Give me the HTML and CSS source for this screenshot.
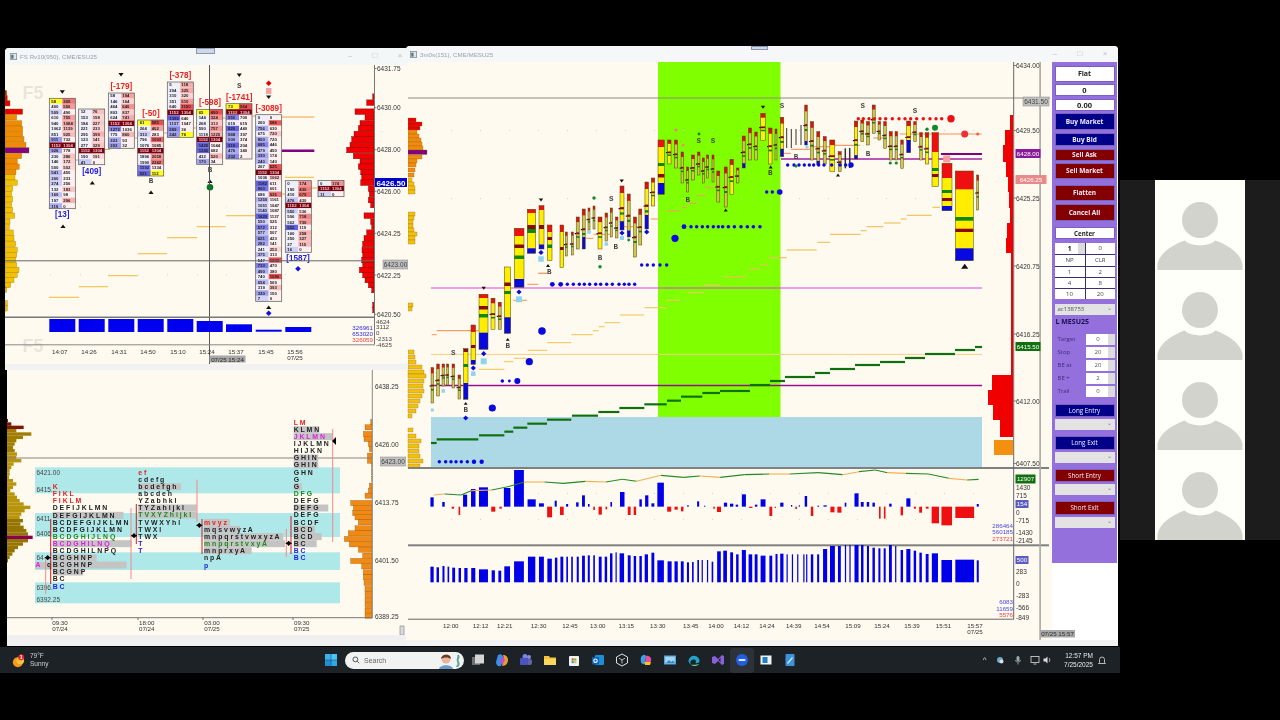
FILE: index.html
```html
<!DOCTYPE html>
<html lang="en">
<head>
<meta charset="utf-8">
<title>Trading charts screen share</title>
<link rel="stylesheet" href="styles.css">
</head>
<body>
<div class="screen">
  <div class="shared">
    <div class="desktop">
      <section class="win win-fs">
        <header class="titlebar">
          <svg class="win-icon" viewBox="0 0 8 8"><rect x="0.5" y="0.5" width="7" height="7" fill="#dfe6ea" stroke="#8a9aa5"/><rect x="1.5" y="2" width="2.5" height="4.5" fill="#55707f"/></svg>
          <span class="title-text">FS Rv10(950), CME/ESU25</span>
          <span class="handle"></span>
          <span class="win-btns"><i>&#8211;</i><i>&#9633;</i><i>&#215;</i></span>
        </header>
        <svg id="fs" class="chart" viewBox="5 65 403 299"></svg>
        <div class="scroll"></div>
      </section>
      <section class="win win-tpo">
        <svg id="tpo" class="chart" viewBox="7 371 399 265"></svg>
        <div class="scroll scroll-tall"></div>
      </section>
      <section class="win win-main">
        <header class="titlebar titlebar-main">
          <svg class="win-icon" viewBox="0 0 8 8"><rect x="0.5" y="0.5" width="7" height="7" fill="#dfe6ea" stroke="#8a9aa5"/><rect x="1.5" y="2" width="2.5" height="4.5" fill="#55707f"/></svg>
          <span class="title-text">3m0s(151), CME/MESU25</span>
          <span class="handle handle-main"></span>
          <span class="win-btns win-btns-main"><i>&#8211;</i><i>&#9633;</i><i>&#215;</i></span>
        </header>
        <div class="main-body">
          <svg id="main" class="chart chart-main" viewBox="406 62 646 578"></svg>
          <aside class="side">
            <div class="panel">
              <div class="cell cell-big">Flat</div>
              <div class="cell">0</div>
              <div class="cell">0.00</div>
              <button class="btn navy tall">Buy Market</button>
              <button class="btn navy">Buy Bid</button>
              <button class="btn maroon sell-ask">Sell Ask</button>
              <button class="btn maroon tall">Sell Market</button>
              <button class="btn maroon tall gap-top-lg">Flatten</button>
              <button class="btn maroon tall">Cancel All</button>
              <div class="cell center-cell">Center</div>
              <div class="qty-grid">
                <div class="qty qty-spin"><b>1</b><span class="spin"></span></div><div class="qty">0</div>
                <div class="qty">NP</div><div class="qty">CLR</div>
                <div class="qty">1</div><div class="qty">2</div>
                <div class="qty">4</div><div class="qty">8</div>
                <div class="qty">10</div><div class="qty">20</div>
              </div>
              <div class="combo combo-acct">ac138753<span class="caret">&#8964;</span></div>
              <div class="instr">L MESU25</div>
              <div class="params">
                <div class="param"><label>Target</label><div class="num">0<span class="spin"></span></div></div>
                <div class="param"><label>Stop</label><div class="num">20<span class="spin"></span></div></div>
                <div class="param"><label>BE at</label><div class="num">20<span class="spin"></span></div></div>
                <div class="param"><label>BE +</label><div class="num">2<span class="spin"></span></div></div>
                <div class="param"><label>Trail</label><div class="num">0<span class="spin"></span></div></div>
              </div>
              <button class="btn navy strat first-strat">Long Entry</button>
              <div class="combo"><span class="caret">&#8964;</span></div>
              <button class="btn navy strat">Long Exit</button>
              <div class="combo"><span class="caret">&#8964;</span></div>
              <button class="btn maroon strat">Short Entry</button>
              <div class="combo"><span class="caret">&#8964;</span></div>
              <button class="btn maroon strat">Short Exit</button>
              <div class="combo"><span class="caret">&#8964;</span></div>
            </div>
          </aside>
        </div>
        <div class="scroll"></div>
      </section>
    </div>
    <footer class="taskbar">
      <div class="weather">
        <svg class="wx-icon" viewBox="0 0 18 18"><circle cx="7" cy="11" r="6" fill="#f59a1c"/><circle cx="10" cy="9" r="4.5" fill="#f9c23c"/><circle cx="11" cy="5" r="3.6" fill="#d9262c"/><text x="11" y="7" class="badge-num">1</text></svg>
        <div class="wx-text"><span>79&#176;F</span><span>Sunny</span></div>
      </div>
      <div class="tasks">
        <svg class="ico" viewBox="0 0 14 14"><rect x="1" y="1" width="5.8" height="5.8" fill="#36b4f0"/><rect x="7.2" y="1" width="5.8" height="5.8" fill="#4cc2f5"/><rect x="1" y="7.2" width="5.8" height="5.8" fill="#1f8fdc"/><rect x="7.2" y="7.2" width="5.8" height="5.8" fill="#2fa6ea"/></svg>
        <div class="search">
          <svg class="search-ico" viewBox="0 0 10 10"><circle cx="4.2" cy="4.2" r="3" fill="none" stroke="#333" stroke-width="1"/><path d="M6.5 6.5 9 9" stroke="#333" stroke-width="1"/></svg>
          <span>Search</span>
          <svg class="search-art" viewBox="0 0 28 16"><circle cx="11" cy="6" r="4.5" fill="#e6b79b"/><path d="M6 6c0-5 10-6 10 0-3-2-7-2-10 0z" fill="#6b3b28"/><path d="M4 16c1-5 13-5 14 0z" fill="#6d9ac9"/><path d="M23 2c2 3-2 4 0 7s-1 4-1 5" fill="none" stroke="#5aa598" stroke-width="2"/></svg>
        </div>
        <svg class="ico" viewBox="0 0 14 14"><rect x="1" y="4" width="8" height="8" fill="#6f6f6f"/><rect x="4" y="1.5" width="9" height="9" fill="#d5d5d5"/></svg>
        <svg class="ico" viewBox="0 0 14 14"><path d="M3 2c3-2 5 0 5 3l-2 8c-3 1-5-1-5-4z" fill="#3b8fe8"/><path d="M8 2c3 0 5 2 5 5s-2 6-6 6l2-7z" fill="#e8a02c"/><path d="M5 8l3-5 2 4-3 5z" fill="#c04dd0"/></svg>
        <svg class="ico" viewBox="0 0 14 14"><circle cx="10" cy="4" r="2" fill="#8b8fdc"/><rect x="8" y="6" width="5" height="6" rx="2" fill="#6264a7"/><circle cx="6" cy="3.5" r="2.5" fill="#7b83eb"/><rect x="1" y="5" width="8" height="7" rx="1" fill="#4b53bc"/></svg>
        <svg class="ico" viewBox="0 0 14 14"><path d="M1 3h5l1 1.5h6V12H1z" fill="#f6c23c"/><rect x="1" y="6" width="12" height="6" fill="#fbd75b"/></svg>
        <svg class="ico" viewBox="0 0 14 14"><rect x="2" y="3" width="10" height="10" rx="1" fill="#f3f3f3"/><rect x="4.6" y="5.4" width="2.2" height="2.2" fill="#e8502c"/><rect x="7.2" y="5.4" width="2.2" height="2.2" fill="#7fba2c"/><rect x="4.6" y="8" width="2.2" height="2.2" fill="#2ca4e8"/><rect x="7.2" y="8" width="2.2" height="2.2" fill="#f6b82c"/></svg>
        <svg class="ico" viewBox="0 0 14 14"><rect x="4" y="2" width="9" height="10" rx="1" fill="#1c8fd8"/><rect x="1" y="4" width="7" height="7.5" rx="1" fill="#0f62b0"/><circle cx="4.5" cy="7.7" r="1.7" fill="none" stroke="#fff" stroke-width="1.1"/></svg>
        <svg class="ico" viewBox="0 0 14 14"><path d="M7 1 12.5 4v6L7 13 1.5 10V4z" fill="none" stroke="#e0e0e0" stroke-width="1"/><path d="M4 5.2 7 7l3-1.8M7 7v3.5" fill="none" stroke="#e0e0e0" stroke-width=".8"/></svg>
        <svg class="ico" viewBox="0 0 14 14"><path d="M2 4c2-3 5-3 5 0L5 11C3 12 1 9 2 4z" fill="#37a0ea"/><path d="M7 3c3-1 6 2 5 5L9 12 6 9z" fill="#e84fa0"/><path d="M5 9h7l-1 3H6z" fill="#f4c430"/></svg>
        <svg class="ico" viewBox="0 0 14 14"><rect x="1" y="2.5" width="12" height="9" fill="#4da8e0"/><rect x="2.2" y="3.7" width="9.6" height="6.6" fill="#a7d5ee"/><path d="M3 10l3-3 2 2 2-1.5 2 2.5z" fill="#3b86c0"/></svg>
        <svg class="ico" viewBox="0 0 14 14"><path d="M1.5 8a5.5 5.5 0 1 1 11 .5c0 1.5-2.5 2-4 1.500 1.500-2-.5-4-3-3.200-2 .7-3 2.500-1.600 4.600C2.800 11 1.500 9.500 1.500 8z" fill="#1fa5c9"/><path d="M4 11.500c2 2.300 6 2 8-.5-2 .8-5.500.8-8 .5z" fill="#58d68d"/></svg>
        <svg class="ico" viewBox="0 0 14 14"><path d="M1 4l3-1 3 3 4-4 2 1v8l-2 1-4-4-3 3-3-1z" fill="#8a5fd8"/><path d="M9.500 4.500v5L7.500 7z" fill="#20242a"/></svg>
        <div class="ico-active"><svg class="ico" viewBox="0 0 14 14"><circle cx="7" cy="7" r="6" fill="#1f5fe0"/><rect x="3.500" y="6" width="7" height="2" rx=".8" fill="#dfe8ff"/></svg></div>
        <svg class="ico" viewBox="0 0 14 14"><rect x="1.500" y="2.500" width="11" height="9" fill="#f2f2f2"/><rect x="3.500" y="4" width="5" height="6" fill="#1f7fc8"/></svg>
        <svg class="ico" viewBox="0 0 14 14"><rect x="2.500" y="1" width="9" height="12" rx="1" fill="#3c93dc"/><path d="M4 10l5-6 1 1-5 6z" fill="#cde9ff"/></svg>
      </div>
      <div class="tray">
        <span class="tray-glyph">&#94;</span>
        <svg class="tray-ico" viewBox="0 0 10 10"><circle cx="5" cy="5" r="3" fill="#6aa8c8"/><circle cx="6.500" cy="6.500" r="2" fill="#e0e0e0"/></svg>
        <svg class="tray-ico" viewBox="0 0 10 10"><rect x="3.500" y="1" width="3" height="5.500" rx="1.500" fill="#9aa"/><path d="M2.500 5c0 3 5 3 5 0M5 8v1.500" stroke="#bbb" fill="none" stroke-width=".7"/></svg>
        <svg class="tray-ico" viewBox="0 0 10 10"><rect x="1" y="1.500" width="8" height="6" fill="none" stroke="#ddd" stroke-width=".8"/><path d="M3.500 9h3" stroke="#ddd" stroke-width=".8"/></svg>
        <svg class="tray-ico tray-vol" viewBox="0 0 10 10"><path d="M1.500 3.500h2l2-2v7l-2-2h-2z" fill="#ddd"/><path d="M7 3c1 1 1 3 0 4" stroke="#ddd" fill="none" stroke-width=".7"/></svg>
        <div class="clock"><span>12:57 PM</span><span>7/25/2025</span></div>
        <svg class="tray-ico" viewBox="0 0 10 10"><path d="M2.500 7.500V4.500a2.500 2.500 0 0 1 5 0v3l1 1h-7z" fill="none" stroke="#ddd" stroke-width=".8"/></svg>
      </div>
    </footer>
  </div>
  <aside class="people">
    <div class="tiles">
      <div class="tile"><svg viewBox="0 0 90 90"><circle class="avatar" cx="45" cy="40" r="18"/><path class="avatar" d="M2.500 90V84C5 72 18 65 29.500 60.500 37 67 53 67 60.500 60.500 72 65 85 72 87.500 84V90Z"/></svg></div>
      <div class="tile"><svg viewBox="0 0 90 90"><circle class="avatar" cx="45" cy="40" r="18"/><path class="avatar" d="M2.500 90V84C5 72 18 65 29.500 60.500 37 67 53 67 60.500 60.500 72 65 85 72 87.500 84V90Z"/></svg></div>
      <div class="tile"><svg viewBox="0 0 90 90"><circle class="avatar" cx="45" cy="40" r="18"/><path class="avatar" d="M2.500 90V84C5 72 18 65 29.500 60.500 37 67 53 67 60.500 60.500 72 65 85 72 87.500 84V90Z"/></svg></div>
      <div class="tile"><svg viewBox="0 0 90 90"><circle class="avatar" cx="45" cy="40" r="18"/><path class="avatar" d="M2.500 90V84C5 72 18 65 29.500 60.500 37 67 53 67 60.500 60.500 72 65 85 72 87.500 84V90Z"/></svg></div>
    </div>
  </aside>
</div>
<script src="app.js"></script>
</body>
</html>
```
FILE: styles.css
```css
* { box-sizing: border-box; }
html, body { margin: 0; padding: 0; background: #000; }
body { width: 1280px; height: 720px; overflow: hidden; font-family: "Liberation Sans", Arial, sans-serif; }
.screen { display: flex; width: 1280px; height: 720px; }
.shared { width: 1120px; padding-top: 46px; display: flex; flex-direction: column; }
.desktop { position: relative; height: 601px; }
.win { position: absolute; background: #fff; display: flex; flex-direction: column; overflow: hidden; }
.win-fs { left: 5px; top: 2px; width: 403px; height: 322px; border-radius: 4px 4px 0 0; z-index: 2; }
.win-tpo { left: 7px; top: 324px; width: 399px; height: 276px; z-index: 2; }
.win-main { left: 406px; top: 0; width: 712px; height: 600px; border-radius: 4px 4px 0 0; z-index: 1; }
.titlebar { height: 17px; flex: none; display: flex; align-items: center; gap: 3px; padding-left: 5px; background: #f4f7f8; position: relative; filter: blur(.4px); }
.titlebar-main { height: 16px; padding-left: 4px; background: #f6f7f8; }
.win-icon { width: 7px; height: 7px; }
.title-text { font-size: 6.200px; color: #98a2a8; }
.handle { position: absolute; left: 191px; top: 0; width: 19px; height: 6px; background: #cfd8e6; border: 1px solid #8a96ad; }
.handle-main { left: 345px; width: 17px; height: 4px; top: 0; }
.win-btns { position: absolute; right: 4px; top: 3px; display: flex; gap: 17px; font-size: 8px; color: #b9bec2; }
.win-btns i { font-style: normal; width: 8px; text-align: center; }
.win-btns-main { right: 9px; }
.chart { display: block; flex: none; background: #fffaf0; filter: blur(.45px); }
#fs { width: 403px; height: 299px; }
#tpo { width: 399px; height: 265px; }
.chart-main { width: 646px; height: 578px; overflow: visible; }
.main-body { display: flex; flex: none; height: 578px; }
.scroll { flex: 1; background: #f2f2f2; }
.scroll-tall { background: #f0f0f0; }
.side { width: 66px; background: #fff; flex: none; }
.panel { width: 65px; height: 501px; background: #9370db; padding: 3.500px 2.500px 0 2.500px; display: flex; flex-direction: column; filter: blur(.35px); font-family: "Open Sans", "Liberation Sans", sans-serif; }
.cell { background: #fff; border: 1px solid #7b5dc6; height: 12px; margin-bottom: 2.500px; display: flex; align-items: center; justify-content: center; font-size: 7.500px; font-weight: 700; color: #222; flex: none; }
.cell-big { height: 16px; font-size: 7px; }
.btn { display: block; flex: none; border: 1px solid #7b62c0; margin: 0 0 3px; padding: 0; height: 13px; width: 100%; font: 700 6.500px "Open Sans", "Liberation Sans", sans-serif; color: #f2e9ff; }
.tall { height: 16.500px; }
.sell-ask { height: 12px; margin-bottom: 2px; }
.gap-top-lg { margin-top: 2.500px; }
.navy { background: #000088; }
.maroon { background: #830000; }
.center-cell { margin-top: 3.500px; margin-bottom: 3.500px; font-size: 6.200px; }
.qty-grid { display: grid; grid-template-columns: 30px 29.500px; grid-template-rows: 11px 11px 10px 10px 10px; gap: 1px; background: #3c2f6e; flex: none; }
.qty { background: #fff; font-size: 6px; color: #444; display: flex; align-items: center; justify-content: center; position: relative; }
.qty b { color: #111; font-size: 6.500px; }
.spin { position: absolute; right: 0; top: 0; bottom: 0; width: 7px; background: #dcdcdc; }
.combo { position: relative; flex: none; background: #e3e3e3; height: 11px; margin: 2px 0 6px; font-size: 6px; color: #555; padding-left: 3px; display: flex; align-items: center; }
.combo-acct { margin: 5px 0 1px; }
.caret { position: absolute; right: 3px; top: 0; font-size: 6px; color: #777; }
.instr { flex: none; font-size: 7px; font-weight: 700; color: #1c1150; height: 18px; line-height: 11px; padding-left: 1px; }
.params { display: flex; flex-direction: column; gap: 2px; flex: none; }
.param { display: flex; height: 11px; align-items: center; justify-content: space-between; padding-left: 3px; }
.param label { font-size: 6px; color: #3d2d78; }
.num { width: 29px; height: 11px; background: #fff; position: relative; font-size: 6px; color: #555; display: flex; align-items: center; justify-content: center; padding-right: 4px; }
.strat { height: 13.500px; margin: 0; font-weight: 400; font-size: 6.300px; border-color: #7b62c0; }
.first-strat { margin-top: 7px; }
.taskbar { height: 26px; width: 1120px; background: #1d2226; display: flex; align-items: center; position: relative; filter: blur(.3px); color: #dfe3e6; }
.weather { display: flex; align-items: center; gap: 3px; margin-left: 12px; width: 311.700px; flex: none; }
.wx-icon { width: 15px; height: 15px; }
.badge-num { font-size: 6px; fill: #fff; text-anchor: middle; font-weight: 700; }
.wx-text { display: flex; flex-direction: column; font-size: 6.500px; line-height: 8px; color: #cfd3d6; }
.tasks { display: flex; align-items: center; gap: 10px; width: 480px; flex: none; }
.ico { width: 14px; height: 14px; flex: none; display: block; }
.ico-active { width: 14px; position: relative; }
.ico-active::before { content: ""; position: absolute; left: -5px; right: -5px; top: -5px; bottom: -6px; background: #2c3238; border-radius: 3px; }
.ico-active .ico { position: relative; }
.search { width: 119px; height: 17px; border-radius: 9px; background: #f1f2f2; margin: 0 -3.300px 0 -2.700px; display: flex; align-items: center; gap: 4px; padding-left: 7px; font-size: 7px; color: #666; position: relative; flex: none; }
.search-ico { width: 8px; height: 8px; }
.search-art { position: absolute; right: 1px; top: 1px; width: 28px; height: 16px; }
.tray { display: flex; align-items: center; margin-left: 179px; gap: 7.500px; }
.tray-glyph { font-size: 8px; color: #e0e0e0; line-height: 8px; margin-right: 1.500px; }
.tray-ico { width: 10px; height: 10px; flex: none; }
.tray-vol { margin-left: -6px; }
.clock { display: flex; flex-direction: column; align-items: flex-end; width: 29px; font-size: 6.500px; line-height: 9px; margin: 0 -3.500px 0 4.500px; color: #e6e8ea; }
.people { width: 160px; height: 360px; margin-top: 180px; background: #1c1c1c; display: flex; justify-content: center; }
.tiles { width: 90px; background: #fffffa; display: flex; flex-direction: column; }
.tile { height: 90px; }
.tile svg { display: block; width: 90px; height: 90px; }
.avatar { fill: #d3d3cd; }
/* chart text */
.chart text { font-family: "Liberation Sans", Arial, sans-serif; }
.ax { font-size: 6.500px; fill: #333; }
.ax-mid { font-size: 6.200px; fill: #444; }
.tm { font-size: 6.200px; fill: #333; text-anchor: middle; }
.fp { font-size: 4.300px; font-weight: 700; fill: #222; }
.fp-poc { font-size: 4.300px; font-weight: 700; fill: #e8c8c8; }
.lab-red { font-size: 8.200px; font-weight: 700; fill: #f02020; text-anchor: middle; }
.lab-blue { font-size: 8.200px; font-weight: 700; fill: #2020e8; text-anchor: middle; }
.chart text.sig { font-family: "Liberation Mono", monospace; font-size: 7.500px; font-weight: 700; fill: #444; text-anchor: middle; }
.wm { font-size: 18px; font-weight: 700; fill: #e9e5dc; }
.boxw { font-size: 6.200px; fill: #fff; text-anchor: middle; }
.boxb { font-size: 8px; font-weight: 700; fill: #fff; text-anchor: middle; }
.boxg { font-size: 6.500px; fill: #444; text-anchor: middle; }
.box-cursor { font-size: 6.200px; fill: #2a2a2a; text-anchor: middle; }
.tot-b { font-size: 6.200px; fill: #4a4ae0; text-anchor: end; }
.tot-r { font-size: 6.200px; fill: #f04040; text-anchor: end; }
.tot-i { font-size: 6.200px; fill: #2a2ae0; text-anchor: end; }
.tpo { font-size: 6.900px; font-weight: 700; }
.tpo-k { fill: #222; }
.tpo-r { fill: #e82020; }
.tpo-g { fill: #1c8a1c; }
.tpo-m { fill: #e020e0; }
.tpo-b { fill: #1a1ae8; }
.lvl { font-size: 6.500px; fill: #444; }
```
FILE: app.js
```js
function R(x, y, w, h, f, extra) { return '<rect x="' + x.toFixed(2) + '" y="' + y.toFixed(2) + '" width="' + Math.max(w, 0).toFixed(2) + '" height="' + Math.max(h, 0).toFixed(2) + '" fill="' + f + '"' + (extra ? ' ' + extra : '') + '/>'; }
function L(x1, y1, x2, y2, c, w) { return '<line x1="' + x1.toFixed(2) + '" y1="' + y1.toFixed(2) + '" x2="' + x2.toFixed(2) + '" y2="' + y2.toFixed(2) + '" stroke="' + c + '" stroke-width="' + (w || 1) + '"/>'; }
function C(x, y, r, f) { return '<circle cx="' + x.toFixed(2) + '" cy="' + y.toFixed(2) + '" r="' + r + '" fill="' + f + '"/>'; }
function T(x, y, s, cls) { return '<text x="' + x.toFixed(2) + '" y="' + y.toFixed(2) + '" class="' + cls + '">' + s + '</text>'; }
function P(d, f) { return '<path d="' + d + '" fill="' + f + '"/>'; }
function tri(x, y, up, s, c) { s = s || 2.6; return P(up ? 'M' + (x - s) + ' ' + (y + s * .7) + 'L' + (x + s) + ' ' + (y + s * .7) + 'L' + x + ' ' + (y - s * .7) + 'Z' : 'M' + (x - s) + ' ' + (y - s * .7) + 'L' + (x + s) + ' ' + (y - s * .7) + 'L' + x + ' ' + (y + s * .7) + 'Z', c || '#111'); }
function dia(x, y, s, c) { return P('M' + x + ' ' + (y - s) + 'L' + (x + s) + ' ' + y + 'L' + x + ' ' + (y + s) + 'L' + (x - s) + ' ' + y + 'Z', c); }
function sq(x, y, s, c) { return R(x - s / 2, y - s / 2, s, s, c); }
var OUT = 'stroke="#8a6a10" stroke-width=".3"';

/* ---------- footprint chart ---------- */
function mix(c, t) { return 'rgb(' + c.map(function (v) { return Math.round(255 - (255 - v) * t); }).join(',') + ')'; }
function footprint(x, top, bot, rows) {
  var w = 26, h = (bot - top) / rows.length, s = '';
  rows.forEach(function (r, i) {
    var y = top + i * h;
    if (r === 'P') { s += R(x, y, w, h, '#7a0012') + T(x + 2, y + h - 1.2, '1152', 'fp-poc') + T(x + 14, y + h - 1.2, '1304', 'fp-poc'); return; }
    var p = r.split(' '), a = parseInt(p[0], 10), b = parseInt(p[1], 10), t = Math.min(1, Math.abs(a - b) / 350);
    var lf = p[0].indexOf('y') > 0 ? '#ffff20' : (a > b ? mix([90, 90, 225], .25 + .7 * t) : mix([90, 90, 225], .1));
    var rf = p[1].indexOf('y') > 0 ? '#ffff20' : (b > a ? mix([235, 70, 70], .2 + .75 * t) : mix([235, 70, 70], .08));
    s += R(x, y, w / 2, h, lf) + R(x + w / 2, y, w / 2, h, rf);
    s += T(x + 2, y + h - 1.2, a, 'fp') + T(x + 14, y + h - 1.2, b, 'fp');
  });
  s += R(x, top, w, bot - top, 'none', 'stroke="#555" stroke-width=".7"');
  return s;
}
function buildFs() {
  var s = '';
  s += T(22.5, 99, 'F5', 'wm') + T(22.5, 352, 'F5', 'wm');
  // left profile
  [[160, 20], [175, 22], [190, 30], [215, 68], [232, 50], [250, 65], [266, 68], [282, 68], [298, 72], [315, 78], [331, 87], [348, 65], [364, 52], [380, 58], [396, 48], [412, 45], [428, 52], [446, 38], [462, 35], [478, 38], [495, 35], [510, 38], [527, 44], [545, 30], [560, 28], [578, 40], [595, 42], [612, 47], [630, 52], [645, 50], [660, 47], [675, 50], [690, 57], [705, 52], [720, 42], [735, 32], [750, 20], [770, 8], [790, 22], [805, 22]].forEach(function (r) {
    var y = 40 + r[0] / 3, c = r[0] < 225 ? '#e60000' : r[0] === 331 ? '#800080' : r[0] < 400 ? '#f08a00' : '#f2c000';
    s += R(5, y - 2.7, (r[1] - 15) / 3, 5.4, c, OUT);
  });
  // right profile
  [[170, 1118], [188, 1100], [215, 1065], [232, 1095], [250, 1080], [265, 1075], [282, 1062], [298, 1055], [315, 1050], [330, 1040], [348, 1060], [365, 1080], [380, 1075], [396, 1082], [412, 1085], [428, 1082], [446, 1105], [462, 1108], [480, 1105], [495, 1112], [527, 1092], [545, 1112], [560, 1115], [578, 1100], [595, 1092], [612, 1088], [630, 1086], [645, 1088], [660, 1085], [675, 1088], [690, 1078], [705, 1088], [720, 1095], [735, 1105], [750, 1115], [795, 1118], [810, 1118]].forEach(function (r) {
    var y = 40 + r[0] / 3;
    s += R(r[1] / 3, y - 2.8, 374 - r[1] / 3, 5.6, '#f00000', 'stroke="#701010" stroke-width=".4"');
  });
  // stairs
  [[285, 314, 177.3], [226, 255, 215.7], [196.7, 225.7, 226.7], [167, 197, 237.7], [137.7, 167, 253.7], [108, 137.7, 275.7], [79, 108, 286.7], [49, 79, 297.3]].forEach(function (r) { s += L(r[0], r[2], r[1], r[2], '#eec04a', 1.1); });
  s += L(281.7, 117, 314.3, 117, '#f0a040', 1.1) + L(281.7, 150.7, 314.3, 150.7, '#800080', 2.4);
  [[104.7, 110, 149.5], [134.3, 137.7, 138], [163.7, 167, 133], [193.3, 196.7, 128], [222.7, 226, 118], [252.3, 255.7, 116], [281.7, 285.3, 194], [311.3, 317.3, 188], [75.3, 78.7, 160]].forEach(function (r) { s += L(r[0], r[2], r[1], r[2], '#e8a060', 1); });
  // dots
  [50, 80, 109, 138, 167, 197, 226, 255, 285].forEach(function (x) { s += R(x, 274.3, 1, 1, '#d8d4c8'); s += R(x, 206.3, 1, 1, '#e4e0d4'); });
  // footprints
  var F = [
    [49.3, 98.3, 208.7, ['58y 305', '400 556', '509 490', '610 755', '940 1084', '1062 1139', '851 925', '911 732', 'P', '926 778', '230 286', '146 172', '500 502', '541 450', '260 233', '274 256', '132 183', '160 98', '197 296', '119 0']],
    [78.7, 109, 164.7, ['12 76', '153 158', '184 227', '221 233', '295 399', '123 141', '277 329', 'P', '190 191', '41 0']],
    [108.3, 93, 148.3, ['58 194', '146 164', '464 640', '803 837', '624 741', 'P', '1272 1036', '775 860', '223 93', '203 32']],
    [137.7, 120, 176, ['61y 585', '264 402', '313 283', '796 1093', '1076 1085', 'P', '1896 2058', '1990 2242', '1592 1334', '521 112y']],
    [167.3, 82, 137.3, ['5 118', '204 325', '310 320', '351 510', '640 1150', 'P', '1396 640', '1137 1047', '269 36', '242 76y']],
    [196.7, 109.3, 164.3, ['65y 490', '144 324', '268 313', '590 757', '1118 1225', 'P', '1425 1044', '1240 682', '432 520', '170 34']],
    [226, 103.7, 159, ['73y 564', 'P', '950 700', '619 619', '820 440', '568 397', '500 374', '919 204', '476 340', '232 2']],
    [255.7, 114.7, 301.3, ['0 0', '260 586', '756 630', '675 720', '850 720', '685 446', '479 450', '330 174', '240 140', '267 625', 'P', '1036 1062', '1182 611', '900 601', '686 936', '1250 1161', '1051 1047', '1140 1087', '1620 1137', '550 525', '572 312', '577 507', '621 423', '282 141', '241 253', '375 313', '547 1233', '733 470', '490 380', '740 1086', '654 569', '319 393', '320 150', '7 0']],
    [285.3, 180.7, 252.3, ['0 174', '190 430', '410 679', '476 430', 'P', '550 536', '506 718', '562 730', '552 119', '160 258', '250 327', '27 115', '16 0']],
    [318, 180.5, 196.7, ['0 174', 'P', '11 0']]
  ];
  F.forEach(function (f) { s += footprint(f[0], f[1], f[2], f[3]); });
  // labels
  [['[-179]', 121.3, 88.7], ['[-378]', 180.3, 77.7], ['[-50]', 151, 116.3], ['[-598]', 210, 105], ['[-1741]', 239.3, 99.7], ['[-3089]', 268.7, 110.7]].forEach(function (l) { s += T(l[1], l[2], l[0], 'lab-red'); });
  [['[13]', 62.3, 217], ['[409]', 91.7, 173.7], ['[1587]', 298, 261.3]].forEach(function (l) { s += T(l[1], l[2], l[0], 'lab-blue'); });
  [[62.3, 92], [121, 74.7], [239.3, 75.3], [268.7, 97.3]].forEach(function (p) { s += tri(p[0], p[1], false); });
  [[63, 226.3], [92.3, 182.7], [151, 192.3], [210, 181.3], [268.7, 307.3]].forEach(function (p) { s += tri(p[0], p[1], true); });
  s += T(239.3, 88, 'S', 'sig') + T(151, 183, 'B', 'sig') + T(210, 172, 'B', 'sig');
  s += dia(268.7, 83.3, 2.8, '#e00000') + dia(298, 268.7, 2.8, '#1010e0') + dia(268.7, 313.3, 2.8, '#1010e0') + R(266, 88, 5.4, 6, '#f5a0a0');
  s += C(210, 187.3, 3.3, '#007a20');
  // crosshair
  s += L(209.5, 65, 209.5, 364, '#555', 1) + L(5, 260.8, 375, 260.8, '#666', 1);
  s += L(5, 317.3, 375, 317.3, '#777', 1.4) + L(5, 344.8, 375, 344.8, '#888', 1);
  // lower volume
  [[49.3, 319, 332], [78.7, 319, 332], [108.3, 319, 332], [137.7, 319, 332], [167.3, 319, 332], [196.7, 321, 332], [226, 324.3, 332], [255.7, 329.7, 331.7], [285.3, 327, 332]].forEach(function (b) { s += R(b[0], b[1], 26, b[2] - b[1], '#0000f0'); });
  s += T(373, 330, '326961', 'tot-i') + T(373, 336, '653020', 'tot-i') + T(373, 342, '326059', 'tot-r');
  ['4624', '3112', '0', '-2313', '-4625'].forEach(function (t, i) { s += T(376, [323.5, 329.3, 335, 340.8, 346.5][i], t, 'ax-mid'); });
  // axis
  s += L(374.5, 65, 374.5, 344, '#777', 1);
  [['6431.75', 71], ['6430.00', 110.2], ['6428.00', 152.2], ['6426.00', 193.8], ['6424.25', 235.8], ['6422.25', 277.5], ['6420.50', 316.8]].forEach(function (a) { s += T(377, a[1], a[0], 'ax'); s += L(374.5, a[1] - 2.5, 376.5, a[1] - 2.5, '#555', .7); });
  s += R(383, 260, 25, 9, '#bdbdbd', 'stroke="#888" stroke-width=".5"') + T(395.5, 267, '6423.00', 'boxg');
  s += R(375, 178, 32, 9, '#0000c8') + T(391, 185.6, '6426.50', 'boxb');
  // times
  [['14:07', 59.7], ['14:26', 89], ['14:31', 119], ['14:50', 148], ['15:10', 178], ['15:24', 207], ['15:37', 236], ['15:45', 266], ['15:56', 295]].forEach(function (t) { s += T(t[1], 353.5, t[0], 'tm'); });
  s += T(295, 360, '07/25', 'tm');
  s += R(209.5, 355.500, 36, 7, '#a8a8a8') + T(227.5, 361.5, '07/25 15:24', 'box-cursor');
  document.getElementById('fs').innerHTML = s;
}

/* ---------- TPO chart ---------- */
function buildTpo() {
  var s = '', Y = function (z) { return 360 + z / 3; };
  [[325, 403], [462, 534], [580, 633], [670, 733]].forEach(function (b) { s += R(35, Y(b[0]), 305, (b[1] - b[0]) / 3, '#aee8e8'); });
  // left profile
  var w = [25, 35, 72, 50, 95, 70, 50, 45, 40, 45, 52, 50, 65, 42, 35, 30, 30, 28, 40, 50, 40, 32, 45, 52, 60, 72, 92, 75, 65, 60, 70, 62, 72, 80, 85, 99, 85, 70, 55, 45, 38, 30, 25];
  w.forEach(function (v, i) {
    var z = 180 + i * 10, c = i < 3 ? '#7a1a00' : i < 10 ? '#a07c00' : i < 30 ? '#b8940c' : '#967400';
    if (i === 35) c = '#8a0050';
    s += R(7, Y(z), (v - 22) / 3, 3.4, c);
  });
  // right profile
  [[190, 1112], [205, 1095], [225, 1090], [240, 1092], [255, 1105], [270, 1108], [290, 1102], [305, 1102], [320, 1115], [340, 1115], [360, 1115], [380, 1108], [395, 1105], [410, 1095], [432, 1052], [447, 1060], [462, 1058], [475, 1065], [490, 1075], [508, 1065], [523, 1045], [540, 1033], [556, 1048], [572, 1075], [590, 1088], [606, 1052], [622, 1085], [640, 1090], [655, 1090], [672, 1092], [690, 1095], [705, 1095], [722, 1095], [738, 1095], [755, 1095], [770, 1095]].forEach(function (r) {
    s += R(r[1] / 3, Y(r[0]) - 2.6, 372 - r[1] / 3, 5.2, '#f08a14', 'stroke="#8a5010" stroke-width=".3"');
  });
  s += L(5, 459, 372, 459, '#8a8578', 1);
  // levels
  [['6421.00', 475.5], ['6415.', 492.5], ['6411', 521.5], ['6406', 536.5], ['64', 560.5], ['6396.', 590.5], ['6392.25', 602.5]].forEach(function (l) { s += T(36.5, l[1], l[0], 'lvl'); });
  // TPO rows
  var sessions = [
    [52.7, [[382, 'K', 'r'], [403, 'F I K L', 'r'], [425, 'F I K L M', 'r'], [447, 'D E F I J K L M N', 'k'], [469, 'D E F G I J K L M N', 'k', 370], [490, 'B C D E F G I J K L M N', 'k'], [512, 'B C D F G I J K L M N', 'k'], [533, 'B C D G H I J L N Q', 'g'], [554, 'B C D G H I L N Q', 'm', 395], [575, 'B C D G H I L N P Q', 'k'], [597, 'B C G H N P', 'k', 290], [618, 'B C G H N P', 'k', 380], [639, 'B C G N P', 'k', 250], [660, 'B C', 'k'], [682, 'B C', 'b']]],
    [138.3, [[340, 'e f', 'r'], [362, 'c d e f g', 'k'], [383, 'b c d e f g h', 'k', 543], [404, 'a b c d e h', 'k'], [425, 'Y Z a b h k l', 'k'], [447, 'T Y Z a h i j k l', 'k', 590], [468, 'T V X Y Z h i j k l', 'g', 590], [490, 'T V W X Y h l', 'k'], [511, 'T W X l', 'k'], [532, 'T W X', 'k'], [554, 'T', 'b'], [575, 'T', 'b']]],
    [204, [[490, 'm v y z', 'r', 690], [511, 'm q s v w y z A', 'k', 720], [533, 'm n p q r s t v w x y z A', 'k', 850], [554, 'm n p q r s t v x y A', 'g', 855], [575, 'm n p r x y A', 'k', 755], [597, 'n p A', 'k'], [620, 'p', 'b']]],
    [293.7, [[190, 'L M', 'r'], [212, 'K L M N', 'k', 958], [233, 'J K L M N', 'm', 998], [255, 'I J K L M N', 'k'], [276, 'H I J K N', 'k'], [297, 'G H I N', 'k', 955], [318, 'G H I N', 'k', 955], [340, 'G H N', 'k'], [361, 'G', 'k'], [383, 'G', 'k', 905], [404, 'D F G', 'g'], [425, 'D E F G', 'k'], [447, 'D E F G', 'k', 985], [468, 'D E F G', 'k'], [490, 'B C D F', 'k'], [511, 'B C D', 'k', 945], [533, 'B C D', 'k', 965], [554, 'B C', 'k', 950], [575, 'B C', 'b'], [597, 'B C', 'b']]]
  ];
  sessions.forEach(function (ss) {
    ss[1].forEach(function (r) {
      if (r[3]) s += R(ss[0], Y(r[0]) - 3.5, r[3] / 3 - ss[0], 7, '#c4c4c4');
    });
  });
  sessions.forEach(function (ss) {
    ss[1].forEach(function (r) { s += T(ss[0], Y(r[0]) + 2.3, r[1], 'tpo tpo-' + r[2]); });
  });
  s += R(35, 563, 17, 7, '#c4c4c4') + T(35.5, 568.3, 'A', 'tpo tpo-m') + T(47, 568.3, 'q', 'tpo tpo-k');
  // vertical lines
  [[50.7, 520, 585], [136.3, 505, 545], [202, 520, 555], [291, 517, 555]].forEach(function (v) { s += L(v[0], v[1], v[0], v[2], '#d81818', 1); });
  [[45.7, 560, 595], [131, 509, 580], [197, 480.7, 523], [286.3, 530, 558], [332.7, 430, 543]].forEach(function (v) { s += L(v[0], v[1], v[0], v[2], '#f08a8a', 1); });
  [[47.7, 558.7], [134, 536.7], [199.3, 526.3], [288.7, 544.3]].forEach(function (p) { s += dia(p[0], p[1], 2.6, '#000') + R(p[0] - 3, p[1] - .5, 6, 1, '#000'); });
  s += P('M336 438V446L332 442Z', '#000');
  // axis
  s += L(372.3, 371, 372.3, 619, '#888', 1) + L(7, 618.7, 372.3, 618.7, '#777', 1);
  [['6438.25', 389.5], ['6426.00', 447.8], ['6413.75', 505.8], ['6401.50', 564], ['6389.25', 619.5]].forEach(function (a) { s += T(375, a[1], a[0], 'ax'); });
  s += R(380.5, 458, 25.5, 9, '#c0c0c0', 'stroke="#888" stroke-width=".5"') + T(393, 465, '6423.00', 'boxg');
  [[60, 52, '09:30', '07/24'], [146.7, 138, '18:00', '07/24'], [212, 203, '03:00', '07/25'], [301.7, 293, '09:30', '07/25']].forEach(function (t) {
    s += L(t[1], 618.7, t[1], 621, '#555', .8) + T(t[0], 626, t[2], 'tm') + T(t[0], 632, t[3], 'tm');
  });
  s += R(400, 627, 4, 9, '#ddd', 'stroke="#666" stroke-width=".5"');
  document.getElementById('tpo').innerHTML = s;
}

/* ---------- main chart ---------- */
function candle(c) {
  var x = c[0], t = c[1], b = c[2], w = c[3], bl = c[4] || 0, H = b - t, s = '';
  if (w <= 1.5) return L(x, t, x, b, '#333', w);
  var fill = w < 3.2 ? '#d4c64a' : '#ffee10';
  s += R(x - w / 2, t, w, H, fill);
  var red = Math.min(H * .16, 7);
  s += R(x - w / 2, t, w, red, '#dd1010');
  s += R(x - w / 2, t + H * .48, w, Math.max(1.8, H * .05), '#8a0a0a');
  if (H > 18) s += R(x - w / 2, t + H * .6, w, Math.max(1.5, H * .05), '#0d8a0d');
  if (bl) s += R(x - w / 2, b - H * bl, w, H * bl, '#0808e0');
  s += R(x - w / 2, t, w, H, 'none', 'stroke="#4a4410" stroke-width=".5"');
  s += R(x - w / 2 - 1.4, t + H * .5, 1.2, 1.2, '#000');
  return s;
}
function bigCandle(x, t, b, w, segs) {
  var s = R(x, t, w, b - t, '#ffee00');
  segs.forEach(function (g) { s += R(x, g[0], w, g[1] - g[0], g[2]); });
  return s + R(x, t, w, b - t, 'none', 'stroke="#4a4410" stroke-width=".5"');
}
function buildMain() {
  var s = '';
  // left profile: [y, end-x in px]
  var lp = [[120, 8, 'r'], [124, 14, 'r'], [128, 12, 'r'], [132, 9, 'o'], [136, 11, 'o'], [140, 13, 'o'], [144, 14, 'o'], [148, 15, 'o'], [152, 19, 'p'], [157, 14, 'o'], [161, 9, 'o'], [165, 8, 'o'], [170, 7, 'o'], [175, 6, 'o'], [180, 4, 'y'], [184, 6, 'y'], [188, 7, 'y'], [192, 7, 'y'],
    [214, 7, 'y'], [218, 6, 'y'], [222, 5, 'y'], [226, 5, 'y'], [230, 6, 'y'], [234, 9, 'y'], [238, 7, 'y'], [242, 7, 'y'],
    [305, 5, 'y'], [309, 4, 'y'], [352, 6, 'y'], [357, 7, 'y'], [362, 8, 'y'], [367, 14, 'y'], [372, 16, 'y'], [376, 18, 'y'], [381, 16, 'y'], [386, 15, 'y'], [391, 16, 'y'], [396, 14, 'y'], [401, 12, 'y'], [406, 10, 'y'], [411, 8, 'y'], [416, 4, 'y'], [430, 5, 'y'], [436, 8, 'y'], [441, 13, 'y'], [446, 11, 'y'], [451, 11, 'y'], [456, 12, 'y'], [461, 15, 'y'], [466, 12, 'y']];
  var colors = { r: '#e60000', o: '#f28a10', p: '#800080', y: '#f2c010' };
  lp.forEach(function (r) { s += R(408, r[0] - 2, r[1], r[2] === 'p' ? 4.5 : 4, colors[r[2]], OUT); });
  // bands
  s += R(658, 62, 122.5, 355, '#80ff00');
  s += R(431, 417, 551, 51, '#add8e6');
  // faint dots
  for (var x = 451; x < 1000; x += 29) { s += R(x, 130, 1, 1, '#d8d4c8') + R(x, 198, 1, 1, '#d8d4c8') + R(x, 493, 1, 1, '#d8d4c8') + R(x, 519, 1, 1, '#d8d4c8'); }
  // horizontal lines
  s += L(408, 98, 1050, 98, '#8c8c80', 1);
  s += L(431, 354.4, 982, 354.4, '#f8cc80', 1);
  s += L(431, 288, 982, 288, '#e040e0', 1.2);
  s += L(431, 385.5, 982, 385.5, '#901090', 1.3);
  s += L(781, 159, 982, 159, '#a020a0', 1.3);
  s += L(941, 154, 982, 154, '#800080', 2.2);
  // yellow stairs
  [[207, 283, 298], [282, 310, 275], [312, 350, 265], [353, 412, 241], [411, 484, 218], [484, 548, 194], [548, 566, 182], [566, 584, 170], [584, 630, 158], [630, 703, 135], [703, 770, 113], [770, 812, 91], [832, 880, 68], [880, 930, 45]].forEach(function (r) { s += L(410 + r[0] / 3, 270 + r[2] / 3, 410 + r[1] / 3, 270 + r[2] / 3, '#f2c860', 1.1); });
  [[10, 80, 560], [85, 120, 537], [122, 145, 525], [145, 200, 503], [200, 290, 480], [292, 330, 457], [330, 422, 433], [422, 440, 422], [440, 490, 410], [492, 542, 399], [542, 560, 387], [560, 635, 376], [637, 660, 352]].forEach(function (r) { s += L(720 + r[0] / 3, 90 + r[2] / 3, 720 + r[1] / 3, 90 + r[2] / 3, '#eec050', 1.1); });
  // orange stairs
  [[65, 80, 194], [80, 205, 182], [352, 385, 43], [310, 352, 91], [385, 412, 10]].forEach(function (r) { s += L(410 + r[0] / 3, 270 + r[2] / 3, 410 + r[1] / 3, 270 + r[2] / 3, '#f0a060', 1.1); });
  [[385, 412, 685], [527, 550, 580], [550, 600, 568], [640, 695, 545], [722, 745, 522], [770, 810, 498], [815, 830, 487], [832, 860, 475], [860, 885, 452], [885, 910, 428]].forEach(function (r) { s += L(410 + r[0] / 3, 45 + r[2] / 3, 410 + r[1] / 3, 45 + r[2] / 3, '#f0a060', 1.1); });
  [[185, 213, 190], [213, 270, 178], [270, 340, 170], [340, 420, 166], [460, 500, 144], [540, 785, 132]].forEach(function (r) { s += L(720 + r[0] / 3, 90 + r[2] / 3, 720 + r[1] / 3, 90 + r[2] / 3, '#f09060', 1.1); });
  // green stepped line
  [[63, 80, 519], [80, 205, 508], [207, 283, 496], [283, 310, 485], [310, 352, 473], [352, 411, 461], [411, 484, 449], [486, 564, 437], [565, 628, 426], [628, 703, 414], [703, 770, 403], [771, 813, 392], [813, 877, 380], [877, 930, 369]].forEach(function (r) { s += L(410 + r[0] / 3, 270 + r[2] / 3, 410 + r[1] / 3, 270 + r[2] / 3, '#107010', 2.2); });
  [[720, 750, 391], [750, 770, 385], [770, 785, 381], [785, 815, 377], [815, 830, 373], [830, 855, 369], [855, 880, 365], [880, 905, 362], [905, 925, 358], [925, 955, 354], [955, 975, 350], [975, 982, 347]].forEach(function (r) { s += L(r[0], r[2], r[1], r[2], '#107010', 2.2); });
  // candles
  [[566.3, 232, 256, 2], [572.3, 232, 255, 2], [577.7, 217, 249, 3], [583.7, 209, 249, 3, .3], [589, 208, 230, 2], [594, 206, 229, 2], [600, 217, 249, 4], [606.3, 213, 241, 2.5], [611.3, 208, 237, 2], [616.7, 217, 238, 2.5], [622, 186, 230, 4, .2], [628.7, 194, 237, 3, .15], [635, 217, 257, 3], [640.3, 209, 245, 3], [646.7, 182, 229, 3.5, .3], [653, 178, 206, 3.5],
    [669.3, 140, 164, 3.5], [676, 140, 168, 3], [682.3, 152, 183, 2.5], [687.7, 167, 192, 2], [693, 155, 180, 3], [698.7, 152, 175, 2.5], [703.3, 158, 183, 2], [707.7, 155, 178, 2], [713, 155, 182, 2], [718.3, 171, 202, 3],
    [432.3, 367.7, 403, 2.5], [438, 364, 396, 2.5], [443.3, 364, 386, 2.5], [447.7, 364, 385, 2], [453.3, 364, 388, 2.5], [459.3, 375, 399, 2.5],
    [493, 298.3, 329.3, 4], [499.7, 302.3, 329.3, 3],
    [725.7, 167, 207, 3], [731.7, 159.3, 194.3, 3.5], [737.7, 168, 183, 2.5], [743.7, 136, 168, 3, .15], [750, 128, 160, 3], [756, 132, 160, 2.5], [763, 113.3, 140.7, 4.5], [770.3, 128, 164, 3.5], [776, 129, 160, 2], [782, 117.3, 156.7, 3.5, .2],
    [786.7, 128, 148, 1], [791.3, 129, 148, 1], [796, 129, 145, 1], [801, 125, 145, 1], [806, 105, 145, 2.5, .1], [812, 121.7, 160, 3], [818.3, 131.7, 165, 3, .12], [824.7, 136.7, 164, 3], [832.3, 140, 171.7, 5], [839.7, 151.7, 171.7, 3], [845.3, 148.3, 168.3, 1.5], [849.7, 148, 168, 1.5], [856, 121, 159, 3.5, .1], [862.3, 120, 141.7, 3], [868, 121.7, 145, 3], [873.7, 105, 133.3, 3], [879.3, 121.7, 140, 2.5], [885, 121.7, 148.3, 2.5], [890.7, 131.7, 160, 3], [896.3, 131.7, 160, 2.5], [902, 140, 168.3, 2.5], [908.7, 121, 152.7, 4, .4], [915, 121.7, 141.7, 2.5], [921, 132.7, 160, 2.5], [927, 132.7, 164, 3.5], [977.7, 175, 210, 2]
  ].forEach(function (c) { s += candle(c); });
  s += bigCandle(514.3, 228.3, 287.3, 9.7, [[228.3, 236, '#ee1010'], [244.5, 248, '#8a0a0a'], [255.5, 259, '#0d8a0d'], [279, 287.3, '#0808e0']]);
  s += bigCandle(504.3, 267, 333.3, 6.4, [[282.500, 286, '#8a0a0a'], [291, 294, '#0d8a0d'], [317.3, 333.3, '#0808e0']]);
  s += bigCandle(527.3, 209.3, 253.3, 8.4, [[209.3, 213, '#ee1010'], [225, 229, '#8a0a0a'], [229, 233, '#0d8a0d'], [248.3, 253.3, '#0808e0']]);
  s += bigCandle(539, 205.7, 249, 5, [[205.7, 210, '#ee1010'], [225, 229, '#8a0a0a'], [244.5, 249, '#0808e0']]);
  s += bigCandle(547.3, 225, 260.7, 4.7, [[225, 232, '#ee1010'], [237, 240, '#8a0a0a'], [244.500, 248, '#0d8a0d']]);
  s += bigCandle(560, 225, 267.7, 3.7, [[225, 232, '#ee1010'], [247, 250, '#8a0a0a']]);
  s += bigCandle(658, 140, 194.3, 6.3, [[140, 147, '#ee1010'], [163, 166, '#0d8a0d'], [174, 177.500, '#8a0a0a'], [183, 194.3, '#0808e0']]);
  s += bigCandle(463.5, 348.7, 399.3, 4.5, [[348.7, 352, '#8a0a0a'], [364, 367, '#0d8a0d'], [383, 399.3, '#0808e0']]);
  s += bigCandle(471, 325, 364.3, 4.5, [[325, 332, '#ee1010'], [345, 348, '#8a0a0a'], [360, 364.3, '#0808e0']]);
  s += bigCandle(479, 294.3, 349.3, 9, [[294.3, 298, '#ee1010'], [306, 309.500, '#8a0a0a'], [314, 317.500, '#0d8a0d'], [332.700, 349.3, '#0808e0']]);
  s += bigCandle(932, 132.7, 186.7, 6.5, [[132.7, 152, '#ee1010'], [168, 171, '#0d8a0d'], [174, 177, '#8a0a0a']]);
  s += bigCandle(942, 163.3, 210.7, 10, [[163.3, 178, '#ee1010'], [190, 193, '#0d8a0d'], [198, 201, '#8a0a0a'], [206, 210.7, '#0808e0']]);
  s += bigCandle(955.3, 171, 260.7, 18, [[171, 189.3, '#ee1010'], [217, 220.7, '#0d8a0d'], [228.700, 232, '#8a0a0a'], [248.3, 260.7, '#0808e0']]);
  // dots
  var blue = '#0808e0';
  [427, 452, 472, 490, 508, 523, 539, 557, 572, 590, 607, 627, 643, 657, 674].forEach(function (z, i) { s += C(410 + z / 3, 284.3, i < 2 ? 2.4 : 1.7, blue); });
  [[277, 1.8], [298, 1.4], [322, 3]].forEach(function (z) { s += C(410 + z[0] / 3, 381, z[1], blue); });
  s += C(542, 331, 3.8, blue) + C(529.3, 361.7, 3.6, blue) + C(492.3, 408, 3.6, blue) + C(675, 238.3, 3.6, blue);
  [88, 107, 123, 138, 154, 172, 192, 215].forEach(function (z, i) { s += C(410 + z / 3, 461.7, i > 5 ? 2.2 : 1.7, blue); });
  [695, 712, 730, 750, 770].forEach(function (z) { s += C(410 + z / 3, 265, 1.7, blue); });
  [822, 843, 860, 877, 893, 910, 925].forEach(function (z, i) { s += C(410 + z / 3, 226.7, i ? 1.7 : 2.4, blue); });
  [8, 25, 43, 63, 82, 100, 120].forEach(function (z) { s += C(720 + z / 3, 226.7, 1.8, blue); });
  s += C(766.7, 192, 1.7, blue) + C(772.3, 192, 1.7, blue) + C(779.7, 192, 2.8, blue);
  [203, 222, 237, 253, 268, 281, 296, 312, 335, 360, 377].forEach(function (z) { s += C(720 + z / 3, 165, 1.7, blue); });
  s += C(851, 165, 2.7, blue);
  [415, 430, 447, 463, 480, 497, 517, 537, 555, 572, 590, 610, 630, 648, 665].forEach(function (z) { s += C(720 + z / 3, 118.7, 1.7, '#ee1010'); });
  s += C(951, 118.7, 3.7, '#ee1010') + C(964.7, 134, 3.5, '#f03030') + C(977.7, 134, 1.5, '#f06040');
  s += C(935, 127.7, 3, '#0d8a2d') + C(927, 129.3, 1.7, '#0d8a2d') + C(890.3, 163, 1.6, '#0d8a2d') + C(896.3, 163, 1.6, '#0d8a2d') + C(796, 166, 1.6, '#0d8a2d') + C(600, 266.7, 1.7, '#0d8a2d') + C(594, 198, 1.7, '#0d8a2d') + C(699, 134, 1.4, '#0d8a2d') + C(628.7, 240, 1.4, '#0d8a2d');
  [[519, 292], [483.7, 353.7], [473.3, 368], [465.7, 418], [541, 252.5], [622, 233], [646.7, 232]].forEach(function (p) { s += dia(p[0], p[1], 2.6, blue); });
  [[519, 299.3, 6], [483.7, 361.3, 6], [473.3, 373.7, 4.5], [443.3, 391, 3.5], [432.3, 410, 3], [541, 259, 5.5], [622, 238, 4], [589, 232, 3.5], [606.3, 244, 3.5], [807, 147, 3]].forEach(function (p) { s += sq(p[0], p[1], p[2], '#8fd3ef'); });
  s += sq(946.7, 159, 7, '#f5a0a0') + C(676, 130, 1.5, '#f08080') + C(683, 145, 1.5, '#f09060');
  // letters
  [[611.3, 198.3], [698.7, 140.7], [713, 140], [782, 105.7], [862.7, 105.7], [915, 110], [453.3, 352.7]].forEach(function (p) { s += T(p[0], p[1] + 2.5, 'S', 'sig'); });
  [[549.3, 271], [600, 257.7], [615.7, 246], [687.7, 199.3], [465.7, 409.3], [507.7, 345.7], [770.3, 172.7], [796, 156.7], [868, 153.3]].forEach(function (p) { s += T(p[0], p[1] + 2.5, 'B', 'sig'); });
  [[507.7, 339.3], [465.7, 403.3], [770.7, 167], [725.7, 210], [548, 265.500], [838, 175]].forEach(function (p) { s += tri(p[0], p[1], true, 2); });
  s += tri(964.7, 266.3, true, 3.6);
  [[483.7, 288.3], [541, 200], [621.7, 181], [763, 107.3]].forEach(function (p) { s += tri(p[0], p[1], false, 2.2); });
  // right profile
  [[115, 130, 1010], [130, 145, 1005], [145, 162, 1003], [162, 177, 1006], [177, 192, 1008], [192, 208, 1009], [208, 223, 1010], [223, 238, 1007], [238, 253, 1006], [253, 300, 1011], [300, 375, 1011], [375, 390, 992], [390, 405, 988], [405, 420, 993], [420, 437, 1000]].forEach(function (r) { s += R(r[2], r[0], 1013 - r[2], r[1] - r[0], '#f00000'); });
  s += R(994, 440, 19, 15, '#f49010');
  // separators
  s += R(408, 467, 641, 2, '#808080') + R(408, 544.3, 641, 2, '#808080') + R(408, 618.7, 606, 1, '#666');
  // delta bars
  var up = [[54, 8, 112], [82, 6, 126], [135, 10, 104], [155, 11, 87], [180, 22, 82], [238, 16, 84], [267, 24, 30], [298, 20, 118], [322, 12, 130], [357, 5, 122], [385, 5, 132], [410, 6, 127], [425, 7, 106], [438, 4, 132], [493, 4, 126], [520, 11, 96], [565, 6, 118], [580, 8, 106], [595, 7, 130], [614, 16, 68], [681, 4, 136], [706, 5, 124], [722, 3, 137], [773, 8, 128], [788, 8, 131], [801, 6, 134], [818, 10, 103], [848, 6, 134], [865, 12, 118], [911, 8, 128], [935, 3, 135], [954, 3, 136], [970, 6, 108], [1000, 4, 137], [1017, 8, 136], [1067, 4, 128], [1094, 10, 100], [1108, 7, 126], [1122, 6, 126], [1136, 6, 128], [1177, 6, 131], [1221, 10, 115], [1391, 5, 132]];
  var dn = [[105, 6, 146], [121, 4, 165], [204, 10, 155], [222, 6, 146], [342, 12, 172], [372, 9, 165], [451, 4, 150], [466, 8, 164], [481, 4, 148], [537, 7, 165], [551, 6, 165], [635, 10, 155], [652, 8, 149], [667, 6, 154], [745, 4, 146], [757, 10, 156], [835, 8, 144], [884, 7, 168], [895, 3, 144], [946, 4, 147], [985, 6, 168], [1035, 10, 157], [1052, 10, 158], [1151, 4, 176], [1163, 4, 176], [1205, 6, 166], [1237, 5, 146], [1251, 7, 158], [1267, 7, 146], [1287, 18, 190], [1315, 26, 196], [1359, 46, 174]];
  var base = 460 + 140 / 3;
  up.forEach(function (b) { var y = 460 + b[2] / 3; s += R(410 + (b[0] - b[1] / 2) / 2.45, y, b[1] / 2.45, base - y, '#0000e8'); });
  dn.forEach(function (b) { var y = 460 + b[2] / 3; s += R(410 + (b[0] - b[1] / 2) / 2.45, base, b[1] / 2.45, y - base, '#ee1010'); });
  // oscillator line
  var pts = [[58, 105], [85, 102], [125, 105], [150, 92], [200, 90], [240, 80], [280, 66], [330, 66], [375, 70], [430, 64], [480, 66], [520, 58], [555, 64], [615, 46], [670, 52], [710, 48], [760, 52], [820, 44], [880, 42], [930, 42], [1000, 38], [1060, 44], [1100, 35], [1140, 30], [1170, 38], [1215, 40], [1270, 42], [1320, 55], [1365, 60], [1393, 58]];
  for (var i = 1; i < pts.length; i++) {
    s += L(410 + pts[i - 1][0] / 2.45, 460 + pts[i - 1][1] / 3, 410 + pts[i][0] / 2.45, 460 + pts[i][1] / 3, i % 3 === 0 ? '#1f8a1f' : (i % 3 === 1 ? '#f0b050' : '#2a8a2a'), 1.1);
  }
  // volume bars
  [[54, 8, 320], [68, 6, 322], [82, 5, 318], [94, 4, 320], [107, 7, 323], [122, 6, 324], [137, 8, 324], [155, 10, 324], [180, 22, 328], [204, 8, 331], [220, 7, 332], [238, 14, 319], [267, 24, 304], [298, 18, 290], [322, 12, 290], [342, 11, 296], [358, 6, 293], [372, 7, 290], [385, 4, 290], [397, 4, 290], [411, 5, 290], [425, 7, 287], [438, 5, 286], [451, 4, 286], [466, 7, 290], [480, 6, 290], [493, 6, 280], [505, 3, 277], [519, 11, 280], [537, 7, 286], [551, 6, 288], [565, 6, 288], [579, 8, 283], [595, 7, 278], [614, 16, 301], [636, 10, 304], [652, 8, 304], [667, 7, 304], [681, 5, 307], [693, 4, 306], [706, 4, 300], [716, 3, 300], [729, 3, 300], [741, 4, 305], [757, 9, 274], [772, 9, 272], [788, 7, 277], [802, 6, 283], [818, 10, 270], [834, 9, 283], [848, 7, 283], [865, 12, 287], [884, 7, 287], [898, 5, 282], [911, 8, 281], [924, 3, 283], [937, 3, 283], [950, 3, 283], [965, 3, 283], [972, 3, 283], [985, 6, 283], [1000, 5, 283], [1017, 10, 267], [1035, 12, 258], [1052, 7, 258], [1067, 3, 255], [1078, 3, 255], [1094, 10, 255], [1108, 6, 255], [1122, 5, 258], [1136, 6, 263], [1150, 5, 265], [1163, 5, 265], [1177, 7, 255], [1190, 3, 258], [1205, 6, 270], [1221, 10, 267], [1237, 6, 272], [1251, 6, 278], [1267, 7, 282], [1286, 15, 280], [1315, 26, 300], [1359, 46, 299], [1391, 5, 301]].forEach(function (b) { var y = 460 + b[2] / 3; s += R(410 + (b[0] - b[1] / 2) / 2.45, y, b[1] / 2.45, 582.3 - y, '#0000e8'); });
  // axes
  s += L(1013.7, 62, 1013.7, 619, '#666', 1) + R(1039.3, 62, 1.6, 578, '#a8a8a8');
  [['6434.00', 68], ['6429.50', 133], ['6425.25', 200.5], ['6420.75', 268.5], ['6416.25', 336.5], ['6412.00', 403.5], ['6407.50', 466]].forEach(function (a) { s += T(1016, a[1], a[0], 'ax'); s += L(1013.7, a[1] - 2.5, 1016, a[1] - 2.5, '#555', .7); });
  s += R(1023, 97, 26, 9, '#c0c0c0', 'stroke="#888" stroke-width=".5"') + T(1036, 104, '6431.50', 'boxg');
  s += R(1015.5, 149, 25, 9, '#8a1a9a') + T(1028, 155.8, '6428.00', 'boxw');
  s += R(1015.5, 175, 31, 9, '#e88a8a') + T(1031, 182, '6426.25', 'boxw');
  s += R(1015.5, 342, 25, 9, '#107010') + T(1028, 348.8, '6415.50', 'boxw');
  [['1430', 490], ['715', 497.5], ['0', 514.5], ['-715', 522.5], ['-1430', 534.5], ['-2145', 543]].forEach(function (a) { s += T(1016, a[1], a[0], 'ax'); });
  s += R(1015.5, 474.500, 20, 9, '#107010') + T(1025.5, 481.4, '12907', 'boxw');
  s += R(1015.500, 500, 13, 8, '#5a5ac0') + T(1022, 506.3, '154', 'boxw');
  [['283', 573.7], ['0', 585.5], ['-283', 598], ['-566', 610], ['-849', 619.5]].forEach(function (a) { s += T(1016, a[1], a[0], 'ax'); });
  s += R(1015.500, 556, 13, 8, '#5a5ac0') + T(1022, 562.300, '500', 'boxw');
  s += T(1013, 528, '286464', 'tot-b') + T(1013, 534, '560185', 'tot-b') + T(1013, 540.500, '273721', 'tot-r');
  s += T(1013, 604, '6083', 'tot-b') + T(1013, 610.500, '11659', 'tot-b') + T(1013, 616.500, '5576', 'tot-r');
  [['12:00', 450.8], ['12:12', 480.6], ['12:21', 504.7], ['12:30', 538.6], ['12:45', 570], ['13:00', 597.8], ['13:15', 626.3], ['13:30', 657.8], ['13:45', 690.8], ['14:00', 716], ['14:12', 741.4], ['14:24', 767], ['14:39', 793.7], ['14:54', 822], ['15:09', 853], ['15:24', 882], ['15:39', 912], ['15:51', 943.5], ['15:57', 975]].forEach(function (t) { s += T(t[1], 628, t[0], 'tm'); });
  s += T(975, 634, '07/25', 'tm');
  s += R(1040, 630, 35, 7.500, '#a8a8a8') + T(1057.5, 636, '07/25 15:57', 'box-cursor');
  document.getElementById('main').innerHTML = s;
}
buildFs();
buildTpo();
buildMain();
```
